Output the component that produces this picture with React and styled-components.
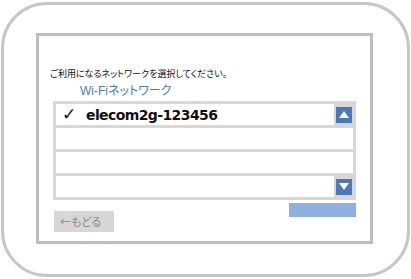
import React from 'react';
import styled, { createGlobalStyle } from 'styled-components';

const GlobalStyle = createGlobalStyle`
  html, body {
    margin: 0;
    padding: 0;
    background: #fff;
  }
  body {
    font-family: 'Noto Sans CJK JP', 'Liberation Sans', sans-serif;
  }
`;

const App = () => {
  return (
    <>
      <GlobalStyle />
      <Device>
        <Screen>
          <Prompt>ご利用になるネットワークを選択してください。</Prompt>
          <Heading>Wi-Fiネットワーク</Heading>
          <List>
            <Row>
              <Cell>
                <Check>✓</Check>
                <Ssid>elecom2g-123456</Ssid>
              </Cell>
              <ScrollButton>
                <Arrow dir="up" />
              </ScrollButton>
            </Row>
            <Row>
              <Cell />
            </Row>
            <Row>
              <Cell />
            </Row>
            <Row>
              <Cell />
              <ScrollButton>
                <Arrow dir="down" />
              </ScrollButton>
            </Row>
          </List>
          <Footer>
            <BackButton>←もどる</BackButton>
            <NextBar />
          </Footer>
        </Screen>
      </Device>
    </>
  );
};

const Device = styled.div`
  box-sizing: border-box;
  width: 409px;
  height: 275px;
  margin: 2px 1px;
  border: 3px solid #c6c6c6;
  border-radius: 46px;
  padding: 28px 0 0 32px;
`;

const Screen = styled.div`
  box-sizing: border-box;
  width: 337px;
  height: 211px;
  border: 3px solid #bdbdbd;
  padding: 32px 14px 0 14px;
  display: flex;
  flex-direction: column;
`;

const Prompt = styled.div`
  margin-left: -3px;
  font-size: 9px;
  line-height: 12px;
  color: #111;
  font-feature-settings: 'palt';
  white-space: nowrap;
`;

const Heading = styled.div`
  margin: 3px 0 0 27px;
  font-family: 'Liberation Sans', 'Noto Sans CJK JP', sans-serif;
  font-size: 12px;
  line-height: 16px;
  color: #4a7cc0;
  font-feature-settings: 'palt';
`;

const List = styled.div`
  margin-top: 2px;
  background: #d7d7d7;
  padding: 3px;
  display: grid;
  grid-auto-rows: 21px;
  gap: 3px;
`;

const Row = styled.div`
  display: flex;
  align-items: center;
`;

const Cell = styled.div`
  flex: 1;
  align-self: stretch;
  background: #fff;
  display: flex;
  align-items: center;
  padding-left: 6px;
`;

const Check = styled.span`
  font-family: 'DejaVu Sans', sans-serif;
  font-size: 17px;
  font-weight: bold;
  line-height: 21px;
  color: #111;
  width: 24px;
`;

const Ssid = styled.span`
  font-family: 'DejaVu Sans', sans-serif;
  font-size: 14px;
  font-weight: bold;
  letter-spacing: -0.6px;
  color: #111;
`;

const ScrollButton = styled.div`
  width: 16px;
  height: 16px;
  margin: 0 1px 0 2px;
  background: #4a78bb;
  display: flex;
  align-items: center;
  justify-content: center;
`;

const Arrow = styled.div`
  width: 0;
  height: 0;
  border-left: 5px solid transparent;
  border-right: 5px solid transparent;
  ${(p) =>
    p.dir === 'up'
      ? 'border-bottom: 7px solid #fff;'
      : 'border-top: 7px solid #fff;'}
`;

const Footer = styled.div`
  display: flex;
  justify-content: space-between;
  align-items: flex-start;
`;

const BackButton = styled.div`
  margin: 11px 0 0 1px;
  width: 60px;
  height: 21px;
  box-sizing: border-box;
  padding-left: 6px;
  background: #d7d7d7;
  color: #8a8a8a;
  font-size: 11px;
  line-height: 21px;
  font-feature-settings: 'palt';
`;

const NextBar = styled.div`
  margin-top: 3px;
  width: 67px;
  height: 14px;
  background: #8db1e1;
`;

export default App;
